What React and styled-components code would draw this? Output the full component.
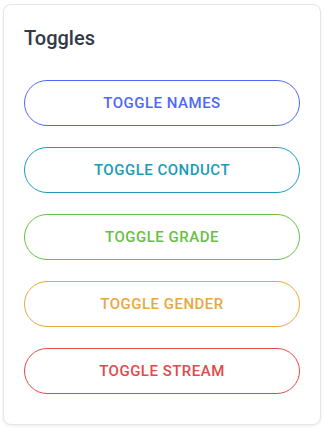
import React from 'react';
import styled, { createGlobalStyle } from 'styled-components';

const GlobalStyle = createGlobalStyle`
    body {
        margin: 0;
        background: #fff;
        font-family: Roboto, "Noto Sans", sans-serif;
    }
`;

const toggles = [
    { label: 'TOGGLE NAMES', color: '#4e68f7' },
    { label: 'TOGGLE CONDUCT', color: '#1a9cb7' },
    { label: 'TOGGLE GRADE', color: '#6abf45' },
    { label: 'TOGGLE GENDER', color: '#eaa740' },
    { label: 'TOGGLE STREAM', color: '#e04a4a' },
];

const App = () => {
    return (
        <Page>
            <GlobalStyle />
            <Card>
                <Title>Toggles</Title>
                <ButtonList>
                    {toggles.map((t) => (
                        <ToggleButton key={t.label} $color={t.color}>
                            {t.label}
                        </ToggleButton>
                    ))}
                </ButtonList>
            </Card>
        </Page>
    );
};

export default App;

const Page = styled.div`
    padding: 4px 4px 4px 3px;
`;

const Card = styled.div`
    width: 318px;
    box-sizing: border-box;
    padding: 21px 20px 30px;
    background-color: #fff;
    border: 1px solid #e4e6ea;
    border-radius: 8px;
    box-shadow: 0 1px 3px rgba(0, 0, 0, 0.08);
`;

const Title = styled.h4`
    margin: 0 0 30px;
    font-size: 20px;
    line-height: 24px;
    font-weight: 500;
    color: #313a46;
`;

const ButtonList = styled.div`
    display: flex;
    flex-direction: column;
    gap: 21px;
`;

const ToggleButton = styled.button`
    height: 46px;
    width: 100%;
    border: 1px solid ${(p) => p.$color};
    border-radius: 23px;
    background: #fff;
    color: ${(p) => p.$color};
    font-family: Roboto, "Noto Sans", sans-serif;
    font-size: 15px;
    font-weight: 500;
    letter-spacing: 0.5px;
    cursor: pointer;
`;
